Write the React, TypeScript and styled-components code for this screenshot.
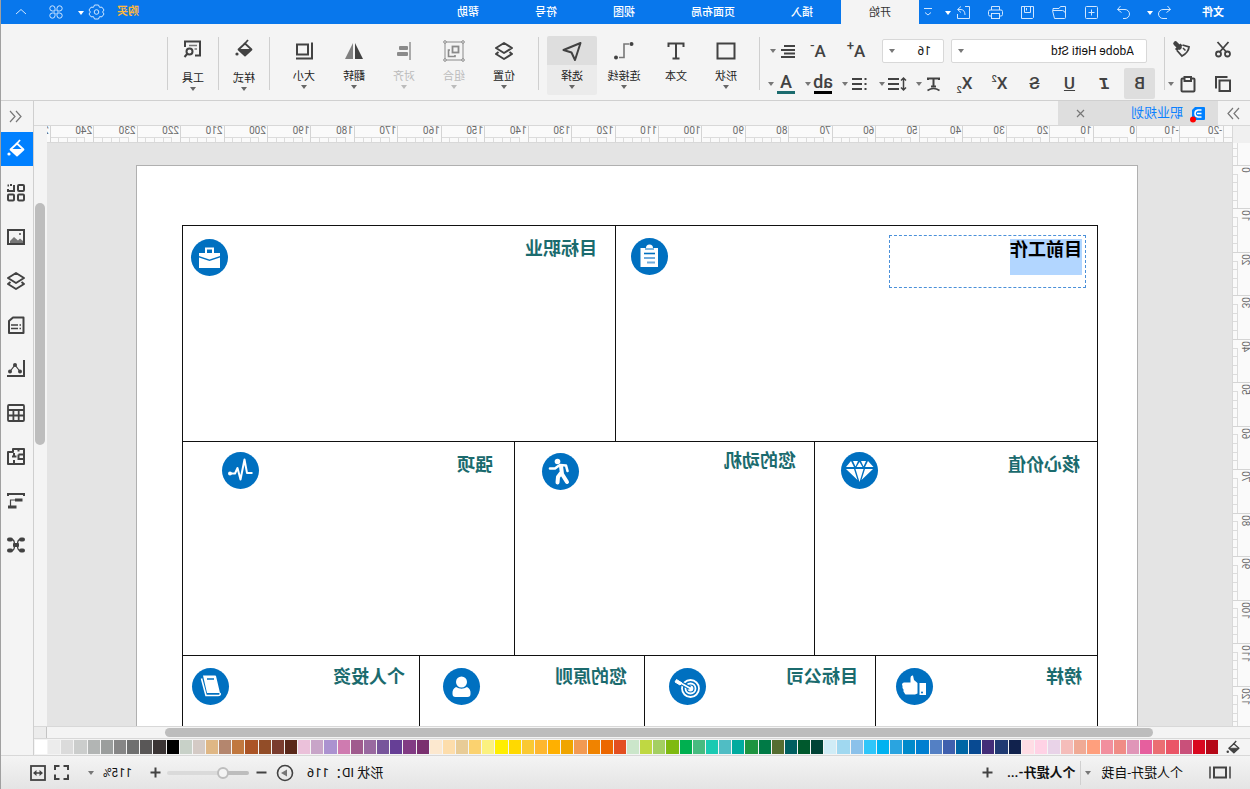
import React from "react";
import styled, { createGlobalStyle, css } from "styled-components";

const GlobalStyle = createGlobalStyle`
  * { box-sizing: border-box; }
  body { margin: 0; overflow: hidden; background: #f4f4f4; }
  button, select, input { font: inherit; color: inherit; margin: 0; }
  button { border: 0; padding: 0; background: none; cursor: default; }
`;

const BLUE = "#0877ec";
const DARK = "#424242";
const TEAL = "#1b6b6e";

/* The whole window is shown flipped left to right. */
const Window = styled.div`
  display: flex;
  flex-direction: column;
  height: 100vh;
  transform: scaleX(-1);
  border-right: 1px solid #a0a0a0;
  background: #f4f4f4;
  color: #222;
  font: 11px/16px Roboto, "Noto Sans CJK SC", sans-serif;
  white-space: nowrap;
`;

/* ---------- icons ---------- */

const Svg = styled.svg`
  display: block;
  flex: none;
  overflow: visible;
  fill: none;
  stroke: currentColor;
`;

const paths: Record<string, React.ReactNode> = {
  undo: <path d="M4.500 1 L1.500 4.500 L5.500 7.500 M1.500 4.500 H9 A4 4 0 0 1 9 13.500 H5" transform="translate(1 0)" />,
  redo: <path d="M10.500 1 L13.500 4.500 L9.500 7.500 M13.500 4.500 H6 A4 4 0 0 0 6 13.500 H8" />,
  add: <><rect x="1.500" y="1.500" width="12" height="12" rx="1" /><path d="M7.500 4.500 V10.500 M4.500 7.500 H10.500" /></>,
  folder: <><path d="M14 5 V3.500 H8 L6.500 1.500 H1.500 V12.500 Q1.500 13.500 2.500 13.500 H12.500 L14.500 5.500 H4.500 Q3 5.500 1.500 8" /></>,
  save: <><path d="M1.500 1.500 H13.500 V13.500 H2.500 L1.500 12.500 Z" /><path d="M4.500 1.500 V7.500 H10.500 V1.500 M8.500 3 V5.500" /></>,
  print: <><path d="M3.500 5 V1.500 H11.500 V5" /><rect x="0.500" y="5" width="14" height="6" rx="1.500" /><rect x="3.500" y="8.500" width="8" height="5" fill={BLUE} /></>,
  share: <><path d="M6 1.500 H1.500 V13.500 H13.500 V9" /><path d="M10 1.500 L13.500 4.500 L10 7.500 M13 4.500 H10 Q6 5 6 10" /></>,
  more: <path d="M1 1.500 H9 M2 5.500 L5 8 L8 5.500" />,
  gear: <><path d="M5.500 1 H9.500 L10.500 3.300 L13 3.200 L15 6 L13.600 8 L15 10 L13 12.800 L10.500 12.700 L9.500 15 H5.500 L4.500 12.700 L2 12.800 L0 10 L1.400 8 L0 6 L2 3.200 L4.500 3.300 Z" /><circle cx="7.500" cy="8" r="2.300" /></>,
  clover: <><path d="M6 6 H3.300 A2.600 2.600 0 1 1 6 3.300 Z M8 6 V3.300 A2.600 2.600 0 1 1 10.700 6 Z M6 8 V10.700 A2.600 2.600 0 1 1 3.300 8 Z M8 8 H10.700 A2.600 2.600 0 1 1 8 10.700 Z" /></>,
  up: <path d="M1 6 L6 1.500 L11 6" />,
  cut: <g strokeWidth="1.800"><circle cx="3.500" cy="13" r="2.500" /><circle cx="12.500" cy="13" r="2.500" /><path d="M2.500 1 L11.300 11 M13.500 1 L4.700 11" /></g>,
  copy: <g strokeWidth="2"><rect x="1" y="4.500" width="10.500" height="10.500" /><path d="M3.500 1 H15 V12.500" /></g>,
  paste: <g strokeWidth="2"><rect x="1.500" y="2.500" width="13" height="13" rx="1" /><path d="M5 1 H11.500 V5 H5 Z" fill="#f4f4f4" /></g>,
  brush: <g><path d="M8.500 3.500 L14 9" strokeWidth="3" /><path d="M10.500 6.500 L14.500 2.500" strokeWidth="4.500" strokeLinecap="round" /><path d="M7.500 4 L1 6 Q1.500 11.500 8 15 L13 9.500" strokeWidth="1.800" /><path d="M4.500 9.500 L7 7" strokeWidth="1.500" /></g>,
  text: <path d="M1.500 5 V1.500 H16.500 V5 M9 1.500 V16.500 M5.500 16.500 H12.500" strokeWidth="2" />,
  shape: <rect x="0.500" y="1.500" width="17" height="15" strokeWidth="2" />,
  connector: <g><circle cx="1.500" cy="2" r="2" fill="currentColor" stroke="none" /><circle cx="17" cy="15.500" r="2" fill="currentColor" stroke="none" /><path d="M4 2 H9 V15.500 H14" stroke="#777" strokeWidth="1.600" /></g>,
  select: <path d="M0.500 1 L17.500 8 L9.500 10.500 L6 18 Z" strokeWidth="2" strokeLinejoin="round" />,
  layers: <g strokeWidth="2" strokeLinejoin="round"><path d="M9 1 L17 6 L9 11 L1 6 Z" /><path d="M3.500 10 L1 12 L9 17 L17 12 L14.500 10" /></g>,
  group: <g strokeWidth="1"><rect x="0" y="0" width="18" height="18" /><rect x="4.500" y="4.500" width="6" height="6" strokeWidth="1.800" /><path d="M13 8 H14.500 V14.500 H8 V13" strokeWidth="1.600" /><circle cx="0" cy="0" r="1.300" fill="#f4f4f4" /><circle cx="18" cy="0" r="1.300" fill="#f4f4f4" /><circle cx="0" cy="18" r="1.300" fill="#f4f4f4" /><circle cx="18" cy="18" r="1.300" fill="#f4f4f4" /></g>,
  align: <g stroke="none" fill="currentColor"><rect x="2" y="0" width="2" height="18" fill="#aaa" /><rect x="5" y="4" width="9" height="4" rx="1" /><rect x="5" y="10" width="11" height="4" rx="1" /></g>,
  flip: <g stroke="none" fill="currentColor"><path d="M8 1 V17 H0 Z" /><path d="M10 1 V17 H18 Z" fill="#808080" /></g>,
  size: <g strokeWidth="2"><rect x="5" y="2.500" width="11" height="10" /><path d="M1 0.500 V16.500 H17" /></g>,
  bucket: <g><path d="M8 3.500 L14.500 9.500 L8 15.500 L1.500 9.500 Z" strokeWidth="1.800" strokeLinejoin="round" /><path d="M2 9.500 H14 L8 15 Z" fill="currentColor" /><path d="M5 0 L9 4.500" strokeWidth="1.800" /><circle cx="16" cy="14" r="1.600" fill="currentColor" stroke="none" /></g>,
  tools: <g strokeWidth="2"><path d="M17 7 V1.500 H2 V15.500 H7" /><path d="M5 5.500 H13 M5 9 H7.500" strokeWidth="1.600" stroke="#777" /><circle cx="12.500" cy="11.500" r="3" /><path d="M14.500 13.500 L17.500 17" /></g>,
  lines: <path d="M0 3 H11 M0 7 H14 M0 10.500 H11 M0 14 H14" strokeWidth="2" />,
  spacing: <g><path d="M7 3 H18 M7 8 H18 M7 13 H18" strokeWidth="2" /><path d="M2.500 2 V14 M0 4.500 L2.500 2 L5 4.500 M0 11.500 L2.500 14 L5 11.500" strokeWidth="1.500" /></g>,
  list: <g strokeWidth="2"><path d="M5 3 H15 M5 8 H15 M5 13 H15" /><path d="M0.500 3 H2.500 M0.500 8 H2.500 M0.500 13 H2.500" /></g>,
  tarc: <g><path d="M2 4 V2.500 H13 V4 M7.500 2.500 V10 M5 10.500 H10" strokeWidth="2" /><path d="M1.500 14.500 Q7.500 10.500 13.500 14.500" strokeWidth="1.600" /></g>,
  left2: <path d="M6 1 L1 6.500 L6 12 M12 1 L7 6.500 L12 12" strokeWidth="1.200" />,
  right2: <path d="M1 1 L6 6.500 L1 12 M7 1 L12 6.500 L7 12" strokeWidth="1.200" />,
  close: <path d="M1 1 L8 8 M8 1 L1 8" strokeWidth="1.200" />,
  logo: <g stroke="none"><path d="M0 1 Q0 0 1 0 H10 L13 3 V12 Q13 13 12 13 H1 Q0 13 0 12 Z" fill="#0080ff" /><path d="M3.500 3 H7 Q10 3.500 10 6.500 Q10 9.500 7 10 H3.500 M3.500 6.500 H8" stroke="#fff" strokeWidth="1.500" /><circle cx="12" cy="12.500" r="3" fill="#f00" /></g>,
  grid: <g strokeWidth="2"><rect x="1" y="1" width="6" height="6" rx="1" /><path d="M11 1 V7 H17 V5 M13 1 H15" /><path d="M16 1.500 H17.500" /><rect x="1" y="10.500" width="6" height="6" rx="1" /><rect x="11" y="10.500" width="6" height="6" rx="1" /></g>,
  image: <g><rect x="1" y="2" width="16" height="14" strokeWidth="2" /><path d="M2 15 V13 L5 10.500 L7 12.500 L11 9 L15 13 V15 Z" fill="#777" stroke="none" /><rect x="4" y="5" width="2" height="2" fill="#777" stroke="none" /></g>,
  doc: <g><path d="M1.500 1.500 H12 L16 5 V17 H1.500 Z" strokeWidth="2" strokeLinejoin="round" /><path d="M4 9 H5.500 M7 9 H14 M4 12.500 H5.500 M7 12.500 H14" strokeWidth="1.600" /></g>,
  chart: <g><path d="M1 0 V16 H18" strokeWidth="2" /><path d="M5 11.500 L10 5 L15 11.500" strokeWidth="1.200" /><g fill="currentColor" stroke="none"><circle cx="5" cy="11.500" r="2" /><circle cx="10" cy="5" r="2" /><circle cx="15" cy="11.500" r="2" /></g></g>,
  table: <g strokeWidth="1.800"><rect x="1" y="1" width="16" height="16" rx="1" /><path d="M1 6 H17 M1 11.500 H17 M6.300 6 V17 M11.600 6 V17" /></g>,
  plan: <g strokeWidth="2"><path d="M1 1 H12 V4 H17 V16 H1 Z" strokeLinejoin="round" /><path d="M1 6.500 H6.500 M6.500 1 V3.500 M6.500 6.500 V11 H1 M11 16 V12 M11 5 V8.500 M8.500 8.500 H13" /></g>,
  gantt: <g strokeWidth="2"><path d="M0 2 H18 M1 1 V4 M17 1 V4" /><path d="M2.500 8 H10" strokeWidth="3" /><path d="M10 8 H14.500 V14" strokeWidth="1.200" /><path d="M8.500 15 H17" strokeWidth="3" /></g>,
  mind: <g><g fill="currentColor" stroke="none"><rect x="0" y="1.500" width="6" height="4" rx="2" /><rect x="12" y="1.500" width="6" height="4" rx="2" /><rect x="0" y="12.500" width="6" height="4" rx="2" /><rect x="12" y="12.500" width="6" height="4" rx="2" /><rect x="6" y="7" width="6" height="4" rx="1" /></g><path d="M5 3.500 Q7.500 3.500 7.500 9 Q7.500 14.500 5 14.500 M13 3.500 Q10.500 3.500 10.500 9 Q10.500 14.500 13 14.500" strokeWidth="1.300" /></g>,
  pages: <g><rect x="5" y="1.500" width="12" height="10" strokeWidth="2" /><path d="M1 0.500 V12.500 M21 0.500 V12.500" strokeWidth="1.500" /></g>,
  plus: <path d="M5.500 0.500 V10.500 M0.500 5.500 H10.500" strokeWidth="2" />,
  minus: <path d="M0.500 5.500 H10.500" strokeWidth="2" />,
  play: <g><circle cx="8" cy="8" r="7.500" strokeWidth="1.600" /><path d="M6 4.500 L12 8 L6 11.500 Z" fill="#777" stroke="none" /></g>,
  full: <path d="M1 5 V1 H5.500 M9.500 1 H14 V5 M14 9.500 V14 H9.500 M5.500 14 H1 V9.500" strokeWidth="2" />,
  fit: <g><rect x="1" y="1" width="14" height="14" strokeWidth="1.800" /><path d="M4 8 H12" strokeWidth="1.500" /><path d="M6.500 5 L3 8 L6.500 11 Z M9.500 5 L13 8 L9.500 11 Z" fill="currentColor" stroke="none" /></g>,
};

const Icon = ({ name, w = 16, h = w, box }: { name: string; w?: number; h?: number; box?: string }) => (
  <Svg width={w} height={h} viewBox={box ?? `0 0 ${w} ${h}`} aria-hidden="true">{paths[name]}</Svg>
);

const Caret = styled.span<{ $c?: string }>`
  flex: none;
  width: 0;
  border: 3px solid transparent;
  border-top: 4px solid ${(p) => p.$c ?? "#777"};
  border-bottom: 0;
`;

/* ---------- title bar ---------- */

const TitleBar = styled.header`
  display: flex;
  flex: none;
  height: 24px;
  background: ${BLUE};
  color: #fff;
`;
const FileButton = styled.button`
  padding: 2px 20px 0 26px;
  font-weight: 700;
`;
const QuickButton = styled.button<{ $w?: number }>`
  display: grid;
  place-items: center;
  width: ${(p) => p.$w ?? 32}px;
  color: #cfe6ff;
`;
const QuickCaret = styled.button`
  display: grid;
  place-items: center;
  width: 8px;
  margin: 2px 6px 0 -4px;
`;
const MenuTab = styled.button<{ $active?: boolean }>`
  padding: 2px 28px 0;
  font-weight: 500;
  ${(p) => p.$active && css`background: #f4f4f4; color: #333; font-weight: 400;`}
`;
const TitleEnd = styled.div`
  display: flex;
  margin-left: auto;
`;
const BuyLink = styled.a`
  align-self: center;
  margin-right: 4px;
  color: #ffb83e;
  font-weight: 700;
  text-decoration: none;
`;

/* ---------- ribbon ---------- */

const Ribbon = styled.div`
  display: flex;
  flex: none;
  height: 77px;
  padding-top: 12px;
  border-bottom: 1px solid #d0d0d0;
  color: ${DARK};
`;
const Divider = styled.i`
  width: 1px;
  height: 53px;
  margin-top: 1px;
  background: #cfcfcf;
`;
const ClipGroup = styled.div`
  display: grid;
  grid-template: 26px 43px / 26px 45px;
  padding-left: 14px;
`;
const ClipButton = styled.button`
  display: flex;
  align-items: center;
  justify-content: center;
  gap: 6px;
  &:nth-child(even) { padding-left: 10px; }
`;
const FormatGroup = styled.div`
  display: grid;
  grid-template-rows: 30px 31px;
  row-gap: 2px;
  padding-left: 9px;
`;
const FormatRow = styled.div`
  display: flex;
  align-items: center;
`;
const Picker = styled.label<{ $w: number }>`
  display: flex;
  align-items: center;
  width: ${(p) => p.$w}px;
  height: 24px;
  margin-right: 7px;
  padding: 0 6px 0 12px;
  border: 1px solid #d8d8d8;
  border-radius: 2px;
  background: #fff;
  color: #111;
  &:first-child { margin-left: 8px; }
  select {
    flex: 1;
    min-width: 0;
    padding: 0;
    border: 0;
    appearance: none;
    background: none;
    font: 12px/16px Roboto, sans-serif;
  }
`;
const Glyph = styled.button<{ $active?: boolean; $grow?: boolean }>`
  width: ${(p) => (p.$grow ? 38 : 31)}px;
  height: 31px;
  margin-right: ${(p) => (p.$grow ? 0 : 4)}px;
  border-radius: 2px;
  background: ${(p) => (p.$active ? "#dedede" : "none")};
  font-size: 17px;
  font-weight: 500;
  line-height: 31px;
  sub { font-size: 9px; line-height: 0; }
  sup { font-size: ${(p) => (p.$grow ? 13 : 9)}px; line-height: 0; }
`;
const Italic = styled.em`
  font-family: "Liberation Mono", monospace;
  font-weight: 700;
`;
const Drop = styled.button`
  display: flex;
  align-items: center;
  width: 32px;
  margin-right: 5px;
`;
const DropFace = styled.span<{ $bar?: string }>`
  display: grid;
  place-items: center;
  width: 22px;
  margin-right: 1px;
  ${(p) => p.$bar && css`
    &::after { content: ""; width: 18px; height: 3px; background: ${p.$bar}; }
  `}
  font-size: 18px;
  font-weight: 500;
  line-height: 18px;
`;
const BigGroup = styled.div<{ $pad?: number }>`
  display: flex;
  padding: 0 ${(p) => p.$pad ?? 8}px;
`;
const BigButton = styled.button<{ $active?: boolean; $w?: number }>`
  display: flex;
  flex-direction: column;
  align-items: center;
  width: ${(p) => p.$w ?? 50}px;
  height: 59px;
  border-radius: 2px;
  ${(p) => p.$active && css`background: linear-gradient(#dedede 29px, #ebebeb 29px);`}
  &:disabled { color: #8a8a8a; }
  &:disabled small { color: #bbb; }
`;
const BigFace = styled.span<{ $low?: boolean }>`
  display: grid;
  place-items: center;
  height: ${(p) => (p.$low ? 25 : 30)}px;
  margin-bottom: ${(p) => (p.$low ? 10 : 3)}px;
`;
const BigLabel = styled.small`
  font-size: 11px;
  line-height: 16px;
  color: #222;
`;

/* ---------- body ---------- */

const Body = styled.div`
  display: flex;
  flex: 1;
  min-height: 0;
`;
const Work = styled.main`
  display: flex;
  flex: 1;
  flex-direction: column;
  min-width: 0;
  border-right: 1px solid #cfcfcf;
`;
const DocTabs = styled.div`
  display: flex;
  flex: none;
  height: 25px;
  border-bottom: 1px solid #d8d8d8;
`;
const Collapse = styled.button`
  display: grid;
  place-items: center;
  width: 32px;
  color: #777;
`;
const DocTab = styled.div`
  display: flex;
  align-items: center;
  gap: 9px;
  width: 160px;
  padding: 0 18px 0 13px;
  background: #dedede;
  color: #0a80ff;
  font-size: 13px;
  button { margin-left: auto; color: #777; }
`;
const Stage = styled.div`
  display: flex;
  flex: 1;
  min-height: 0;
`;
const StageMain = styled.div`
  display: grid;
  flex: 1;
  grid-template: 17px minmax(0, 1fr) / 18px minmax(0, 1fr);
  min-width: 0;
`;
const Corner = styled.div`
  background: #f0f0f0;
  border-right: 1px solid #d8d8d8;
`;
const Ruler = styled.div<{ $vertical?: boolean }>`
  display: flex;
  flex-direction: ${(p) => (p.$vertical ? "column" : "row")};
  overflow: hidden;
  background: #fafafa;
  ${(p) => (p.$vertical ? "border-right" : "border-bottom")}: 1px solid #d8d8d8;
`;
const Segment = styled.div<{ $vertical?: boolean }>`
  position: relative;
  display: flex;
  flex: none;
  flex-direction: ${(p) => (p.$vertical ? "column" : "row")};
  align-items: flex-end;
  ${(p) => (p.$vertical ? "border-top" : "border-left")}: 1px solid #d4d4d4;
`;
const Tick = styled.i<{ $vertical?: boolean }>`
  flex: 1;
  ${(p) => (p.$vertical
    ? css`width: 5px; & + & { border-top: 1px solid #dcdcdc; }`
    : css`height: 5px; & + & { border-left: 1px solid #dcdcdc; }`)}
`;
const RulerLabel = styled.span<{ $vertical?: boolean }>`
  position: absolute;
  top: ${(p) => (p.$vertical ? 1 : -1)}px;
  left: ${(p) => (p.$vertical ? -1 : 1)}px;
  color: #6b6b6b;
  font-size: 10px;
  line-height: 12px;
  ${(p) => p.$vertical && css`writing-mode: vertical-rl; transform: rotate(180deg);`}
`;
const Canvas = styled.div`
  overflow: hidden;
  padding: 22px 0 0 94px;
  background: #e4e4e4;
`;
const Paper = styled.div`
  width: 1002px;
  height: 900px;
  padding: 59px 0 0 39px;
  border: 1px solid #b0b0b0;
  background: #fff;
`;
const Plan = styled.div`
  width: 916px;
  border: 1px solid #111;
  border-width: 1px 0 0 1px;
`;
const PlanRow = styled.div<{ $cols: string; $h: number }>`
  display: grid;
  grid-template-columns: ${(p) => p.$cols};
  height: ${(p) => p.$h}px;
`;
const Cell = styled.section<{ $left: number; $right: number }>`
  display: flex;
  align-items: flex-start;
  justify-content: space-between;
  padding: 0 ${(p) => p.$right}px 0 ${(p) => p.$left}px;
  border: 1px solid #111;
  border-width: 0 1px 1px 0;
`;
const Title = styled.h2<{ $top: number }>`
  margin: ${(p) => p.$top}px 0 0;
  color: ${TEAL};
  font: 700 18px/24px "Noto Sans CJK SC", sans-serif;
`;
const TextFrame = styled.div`
  width: 197px;
  height: 53px;
  margin-top: 9px;
  padding: 3px;
  border: 1px dashed #4a90d9;
  mark {
    display: inline-block;
    height: 36px;
    background: #b2d6ff;
    color: #000;
    font: 700 18px/18px "Noto Sans CJK SC", sans-serif;
  }
`;
const Badge = styled.div<{ $top: number }>`
  display: grid;
  place-items: center;
  width: 37px;
  height: 37px;
  margin-top: ${(p) => p.$top}px;
  border-radius: 50%;
  background: #0070c0;
  color: #fff;
`;
const VScroll = styled.div`
  flex: none;
  width: 13px;
  padding: 77px 1px 0 2px;
  background: #f4f4f4;
`;
const Thumb = styled.div<{ $wide?: boolean }>`
  width: ${(p) => (p.$wide ? "988px" : "10px")};
  height: ${(p) => (p.$wide ? "9px" : "242px")};
  border-radius: 5px;
  background: #bdbdbd;
`;
const HScroll = styled.div`
  display: flex;
  flex: none;
  height: 13px;
  border: 1px solid #d8d8d8;
  border-width: 1px 0;
`;
const HTrack = styled.div`
  flex: 1;
  min-width: 0;
  padding: 1px 0 0 97px;
  border-right: 1px solid #c4c4c4;
`;
const HCorner = styled.div`
  width: 12px;
  background: #ececec;
`;
const Palette = styled.div`
  display: flex;
  flex: none;
  align-items: center;
  height: 16px;
  color: ${DARK};
`;
const PaletteIcon = styled.button`
  display: grid;
  place-items: center;
  width: 32px;
`;
const Swatches = styled.div`
  display: grid;
  flex: 1;
  grid-template-columns: repeat(90, 1fr);
  column-gap: 1px;
  height: 14px;
  padding-right: 1px;
`;
const Swatch = styled.button<{ $c: string }>`
  background: ${(p) => p.$c};
`;
const Side = styled.aside`
  display: flex;
  flex: none;
  flex-direction: column;
  gap: 10px;
  width: 32px;
  color: ${DARK};
`;
const SideHead = styled.button`
  display: grid;
  place-items: center;
  height: 31px;
  margin-bottom: -10px;
  padding-left: 2px;
  color: #777;
`;
const SideButton = styled.button<{ $active?: boolean }>`
  display: grid;
  place-items: center;
  height: 34px;
  padding-left: 2px;
  ${(p) => p.$active && css`background: #0080ff; color: #fff;`}
`;

/* ---------- status bar ---------- */

const Status = styled.footer`
  display: flex;
  flex: none;
  align-items: center;
  height: 34px;
  padding: 0 25px 0 19px;
  border-top: 1px solid #d8d8d8;
  background: linear-gradient(#f4f4f4, #e4e4e4);
  color: #111;
  font-size: 13px;
`;
const StatusIcon = styled.button<{ $w: number }>`
  display: grid;
  place-items: center;
  width: ${(p) => p.$w}px;
  color: ${DARK};
`;
const PagePicker = styled.button`
  display: flex;
  align-items: center;
  gap: 10px;
  height: 24px;
  margin-left: 26px;
  padding-right: 4px;
  border-right: 1px solid #d0d0d0;
`;
const CurrentPage = styled.button`
  margin: 0 13px 0 5px;
  font-weight: 700;
`;
const StatusEnd = styled.div`
  display: flex;
  align-items: center;
  margin-left: auto;
`;
const ShapeId = styled.output`
  margin-right: 4px;
`;
const Zoom = styled.input`
  appearance: none;
  width: 82px;
  height: 4px;
  margin: 0 6px;
  border-radius: 2px;
  background: linear-gradient(90deg, #bdbdbd 30%, #dadada 30%);
  &::-webkit-slider-thumb {
    appearance: none;
    width: 12px;
    height: 12px;
    border: 2px solid #bdbdbd;
    border-radius: 50%;
    background: #f4f4f4;
  }
`;
const ZoomPick = styled.button`
  display: flex;
  align-items: center;
  gap: 9px;
  margin: 0 14px 0 17px;
  font-size: 12px;
`;

/* ---------- data ---------- */

const tabs = ["开始", "插入", "页面布局", "视图", "符号", "帮助"];
const sideIcons = ["bucket", "grid", "image", "layers", "doc", "chart", "table", "plan", "gantt", "mind"];

const colors = (
  "b50717 d90820 c9507a ea5567 eb6e73 e65f9e e096b8 f08c86 f28f9e ff9f7d f0aa95 f5bdba e9d3e8 ffd2e5 ffdde5 " +
  "11224d 203a72 432d78 084a92 0066a5 3f60ae 5480c4 007fd0 008acb 2aa4e0 00b2f0 2fc6fa 8bc1ea a0d8f0 d0ecf6 " +
  "004336 00592d 005f60 556d31 007a46 1d9440 00ab9f 50bdc4 1acab2 47bb80 00b050 7fba10 a4cf62 bfd842 cbe6ca " +
  "e34f20 ec6700 f08300 f29a52 f0a500 ffb000 feb72f fac932 ffd900 ffee00 fbf17f fbd26f e8cc97 fdddab fce8cf " +
  "7a3070 823b84 663f96 77559b 9969a0 a05b8e cf7bb0 ab92d0 c8a5c8 ebc1da " +
  "5a281a 7a3c2e 924d28 ab5426 c1783f b4866e dfb785 d4cac5 c8d1c8 " +
  "000000 3b3535 595757 6f7070 868686 9b9e9d b2b5b4 cbcdcc dbdbdb ececec ffffff"
).split(" ");

/* Pixels per millimetre at a zoom of 115%. */
const MM = (96 / 25.4) * 1.15;

const Scale = ({ from, to, first, last, origin, vertical }: { from: number; to: number; first: number; last: number; origin: number; vertical?: boolean }) => {
  const start = origin + from * MM;
  const marks: number[] = [];
  for (let v = from; v <= to; v += 10) marks.push(v);
  return (
    <Ruler $vertical={vertical} aria-hidden="true">
      {marks.map((v, i) => {
        const length = 10 * MM;
        const offset = i === 0 ? start : 0;
        return (
          <Segment
            key={v}
            $vertical={vertical}
            style={vertical ? { height: length, marginTop: offset } : { width: length, marginLeft: offset }}
          >
            {v >= first && v <= last && <RulerLabel $vertical={vertical}>{v}</RulerLabel>}
            {[0, 1, 2, 3, 4].map((t) => <Tick key={t} $vertical={vertical} />)}
          </Segment>
        );
      })}
    </Ruler>
  );
};

const badges: Record<string, React.ReactNode> = {
  clipboard: <g stroke="none"><path d="M10 10 H15 Q15 6.500 18.500 6.500 Q22 6.500 22 10 H27.500 V29 H10 Z" fill="#fff" /><path d="M14 11 H23" stroke="#0070c0" strokeWidth="1" /><path d="M13 15.500 H24" stroke="#0070c0" strokeWidth="1.600" /><path d="M13 20 H24 M13 24.500 H21" stroke="#6fabdc" strokeWidth="2" /></g>,
  briefcase: <g stroke="none"><path d="M8 14 H29 V17 L18.500 20.500 L8 17 Z M8 18.500 L18.500 22 L29 18.500 V29 H8 Z" fill="#fff" /><path d="M15 14 V9.500 H22 V14" stroke="#fff" strokeWidth="2" /></g>,
  diamond: <g fill="#fff" stroke="none"><path d="M10 9 L13 15 H4.500 Z M12 9 H17 L14.500 14.500 Z M18.500 10 L21.500 15 H15.500 Z M20 9 H25 L22.500 14.500 Z M27 9 L32 15 H24 Z M5 17 H13 L16.500 28 Z M14.500 17 H22.500 L18.500 30 Z M24 17 H32 L20.500 28 Z" /></g>,
  walk: <g stroke="#fff" strokeLinecap="round" strokeLinejoin="round"><circle cx="21.500" cy="8.500" r="2.800" fill="#fff" stroke="none" /><path d="M18 13 L17 21 L12 29 M18 20 L21 24 L21.500 29.500" strokeWidth="4" /><path d="M19 12 L13 12.500 L11.500 18 M20 12.500 L24 15.500 L29 15.500" strokeWidth="2.600" /></g>,
  pulse: <g stroke="#fff" strokeWidth="2" strokeLinejoin="round"><path d="M6.500 21 H12 L14.500 7.500 L18.500 27.500 L21.500 16 L24 21.500 H28" /><circle cx="29" cy="21.500" r="2" fill="#fff" stroke="none" /></g>,
  thumb: <g stroke="none"><path d="M7 15 H13.500 V27 H7 Z M15.500 15 L19 12 L20 7.500 Q22.500 7 22.500 10 V14.500 H29 Q32 15.500 30.500 18 Q31 20 29.500 21.500 Q30 23.500 28.500 25 Q28 27 26 26.500 H18 L15.500 25.500 Z" fill="#fff" /><circle cx="11" cy="24.500" r="1" fill="#0070c0" /></g>,
  target: <g stroke="#fff" strokeWidth="1.800"><circle cx="15.500" cy="20.500" r="8.500" /><circle cx="15.500" cy="20.500" r="5" /><circle cx="15.500" cy="20.500" r="2" fill="#fff" /><path d="M16 20 L29 13" stroke="#0070c0" strokeWidth="4" /><path d="M15.500 20.500 L28 13.500" /><path d="M24 15 L29.500 11.500 L31 14 L26 17 Z" fill="#fff" strokeWidth="1" /></g>,
  person: <g fill="#fff" stroke="none"><circle cx="18.500" cy="14" r="5.500" /><path d="M13 19 Q18.500 22.500 24 19 Q28 21 27.500 26 Q27.500 29 24.500 29 H12.500 Q9.500 29 9.500 26 Q9 21 13 19 Z" /></g>,
  book: <g stroke="none"><path d="M13 8 Q13 7.500 14 7.500 H26 L22 25 H9 Z" fill="#fff" /><path d="M9 25 Q8 27.500 11 27.500 H23 L27.500 10.500" stroke="#fff" strokeWidth="1.600" /><path d="M15 11 H22" stroke="#0070c0" strokeWidth="1.500" /></g>,
};

type CellData = [title: string, top: number, left: number, badge: string, badgeTop: number, right: number];
const plan: { cols: string; h: number; cells: CellData[] }[] = [
  { cols: "482px 1fr", h: 216, cells: [["目前工作", 0, 11, "clipboard", 12, 15], ["目标职业", 9, 18, "briefcase", 13, 8]] },
  { cols: "283px 300px 1fr", h: 214, cells: [["核心价值", 9, 17, "diamond", 10, 26], ["您的动机", 5, 18, "walk", 11, 27], ["强项", 9, 21, "pulse", 10, 39]] },
  { cols: "222px 231px 225px 1fr", h: 300, cells: [["榜样", 7, 15, "thumb", 12, 20], ["目标公司", 7, 17, "target", 12, 24], ["您的原则", 7, 17, "person", 12, 23], ["个人投资", 7, 14, "book", 12, 9]] },
];

type BigProps = { icon: string; label: string; caret?: boolean; low?: boolean; w?: number; active?: boolean; disabled?: boolean };
const Big = ({ icon, label, caret = true, low, w, active, disabled }: BigProps) => (
  <BigButton $active={active} disabled={disabled} $w={w}>
    <BigFace $low={low}><Icon name={icon} w={18} /></BigFace>
    <BigLabel>{label}</BigLabel>
    {caret && <Caret $c={disabled ? "#bbb" : "#666"} />}
  </BigButton>
);

export default function App() {
  return (
    <Window>
      <GlobalStyle />
      <TitleBar>
        <FileButton>文件</FileButton>
        <QuickButton aria-label="撤销"><Icon name="undo" w={15} /></QuickButton>
        <QuickCaret aria-label="历史"><Caret $c="#fff" /></QuickCaret>
        {["redo", "add", "folder", "save", "print", "share"].map((n) => (
          <QuickButton key={n} aria-label={n}><Icon name={n} w={15} /></QuickButton>
        ))}
        <QuickCaret aria-label="导出"><Caret $c="#fff" /></QuickCaret>
        <QuickButton $w={19} aria-label="更多"><Icon name="more" w={10} /></QuickButton>
        {tabs.map((t, i) => <MenuTab key={t} $active={i === 0}>{t}</MenuTab>)}
        <TitleEnd>
          <BuyLink href="#buy">购买</BuyLink>
          <QuickButton aria-label="设置"><Icon name="gear" w={15} h={16} /></QuickButton>
          <QuickCaret aria-label="设置菜单"><Caret $c="#fff" /></QuickCaret>
          <QuickButton $w={30} aria-label="应用"><Icon name="clover" w={14} /></QuickButton>
          <QuickButton $w={40} aria-label="收起"><Icon name="up" w={12} h={8} /></QuickButton>
        </TitleEnd>
      </TitleBar>

      <Ribbon>
        <ClipGroup>
          <ClipButton aria-label="剪切"><Icon name="cut" w={16} /></ClipButton>
          <ClipButton aria-label="格式刷"><Icon name="brush" w={16} /></ClipButton>
          <ClipButton aria-label="复制"><Icon name="copy" w={16} /></ClipButton>
          <ClipButton aria-label="粘贴"><Icon name="paste" w={16} /><Caret /></ClipButton>
        </ClipGroup>
        <Divider />
        <FormatGroup>
          <FormatRow>
            <Picker $w={196}>
              <select aria-label="字体"><option>Adobe Heiti Std</option></select>
              <Caret />
            </Picker>
            <Picker $w={62}>
              <select aria-label="字号"><option>16</option></select>
              <Caret />
            </Picker>
            <Glyph $grow>A<sup>+</sup></Glyph>
            <Glyph $grow>A<sup>-</sup></Glyph>
            <Drop aria-label="对齐"><DropFace><Icon name="lines" w={14} h={16} /></DropFace><Caret /></Drop>
          </FormatRow>
          <FormatRow>
            <Glyph $active>B</Glyph>
            <Glyph><Italic>I</Italic></Glyph>
            <Glyph><u>U</u></Glyph>
            <Glyph><s>S</s></Glyph>
            <Glyph>X<sup>2</sup></Glyph>
            <Glyph>X<sub>2</sub></Glyph>
            <Drop aria-label="文字效果"><DropFace><Icon name="tarc" w={15} h={16} /></DropFace><Caret /></Drop>
            <Drop aria-label="行距"><DropFace><Icon name="spacing" w={18} h={16} /></DropFace><Caret /></Drop>
            <Drop aria-label="列表"><DropFace><Icon name="list" w={15} h={16} /></DropFace><Caret /></Drop>
            <Drop><DropFace $bar="#000">ab</DropFace><Caret /></Drop>
            <Drop><DropFace $bar={TEAL}>A</DropFace><Caret /></Drop>
          </FormatRow>
        </FormatGroup>
        <Divider />
        <BigGroup>
          <Big icon="shape" label="形状" />
          <Big icon="text" label="文本" caret={false} />
          <Big icon="connector" label="连接线" w={54} />
          <Big icon="select" label="选择" active />
        </BigGroup>
        <Divider />
        <BigGroup $pad={9}>
          <Big icon="layers" label="位置" />
          <Big icon="group" label="组合" disabled />
          <Big icon="align" label="对齐" disabled />
          <Big icon="flip" label="翻转" />
          <Big icon="size" label="大小" />
        </BigGroup>
        <Divider />
        <BigGroup $pad={0}><Big icon="bucket" label="样式" low /></BigGroup>
        <Divider />
        <BigGroup $pad={0}><Big icon="tools" label="工具" low /></BigGroup>
        <Divider />
      </Ribbon>

      <Body>
        <Work>
          <DocTabs>
            <Collapse aria-label="展开左侧"><Icon name="right2" w={13} /></Collapse>
            <DocTab>
              <Icon name="logo" w={13} />
              职业规划
              <button aria-label="关闭"><Icon name="close" w={9} /></button>
            </DocTab>
          </DocTabs>
          <Stage>
            <StageMain>
              <Corner />
              <Scale from={-30} to={250} first={-20} last={250} origin={95} />
              <Scale from={-10} to={130} first={0} last={120} origin={22} vertical />
              <Canvas>
                <Paper>
                  <Plan>
                    {plan.map((row) => (
                      <PlanRow key={row.cols} $cols={row.cols} $h={row.h}>
                        {row.cells.map(([title, top, left, badge, badgeTop, right]) => (
                          <Cell key={title} $left={left} $right={right}>
                            {badge === "clipboard"
                              ? <TextFrame><mark>{title}</mark></TextFrame>
                              : <Title $top={top}>{title}</Title>}
                            <Badge $top={badgeTop}>
                              <Svg width={37} height={37} viewBox="0 0 37 37">{badges[badge]}</Svg>
                            </Badge>
                          </Cell>
                        ))}
                      </PlanRow>
                    ))}
                  </Plan>
                </Paper>
              </Canvas>
            </StageMain>
            <VScroll><Thumb /></VScroll>
          </Stage>
          <HScroll>
            <HTrack><Thumb $wide /></HTrack>
            <HCorner />
          </HScroll>
          <Palette>
            <PaletteIcon aria-label="填充颜色"><Icon name="bucket" w={13} box="0 0 17 17" /></PaletteIcon>
            <Swatches>
              {colors.map((c, i) => <Swatch key={i} $c={`#${c}`} aria-label={`#${c}`} />)}
            </Swatches>
          </Palette>
        </Work>
        <Side>
          <SideHead aria-label="收起面板"><Icon name="left2" w={13} /></SideHead>
          {sideIcons.map((n, i) => (
            <SideButton key={n} $active={i === 0} aria-label={n}><Icon name={n} w={18} /></SideButton>
          ))}
        </Side>
      </Body>

      <Status>
        <StatusIcon $w={22} aria-label="页面"><Icon name="pages" w={22} h={13} /></StatusIcon>
        <PagePicker>个人提升-自我<Caret /></PagePicker>
        <CurrentPage>个人提升-...</CurrentPage>
        <StatusIcon $w={12} aria-label="新页面"><Icon name="plus" w={11} /></StatusIcon>
        <StatusEnd>
          <ShapeId>形状 ID：116</ShapeId>
          <StatusIcon $w={36} aria-label="播放"><Icon name="play" w={16} /></StatusIcon>
          <StatusIcon $w={12} aria-label="缩小"><Icon name="minus" w={11} /></StatusIcon>
          <Zoom type="range" aria-label="缩放" min={0} max={100} defaultValue={28} />
          <StatusIcon $w={12} aria-label="放大"><Icon name="plus" w={11} /></StatusIcon>
          <ZoomPick>115%<Caret /></ZoomPick>
          <StatusIcon $w={24} aria-label="全屏"><Icon name="full" w={15} /></StatusIcon>
          <StatusIcon $w={24} aria-label="适应宽度"><Icon name="fit" w={16} /></StatusIcon>
        </StatusEnd>
      </Status>
    </Window>
  );
}
